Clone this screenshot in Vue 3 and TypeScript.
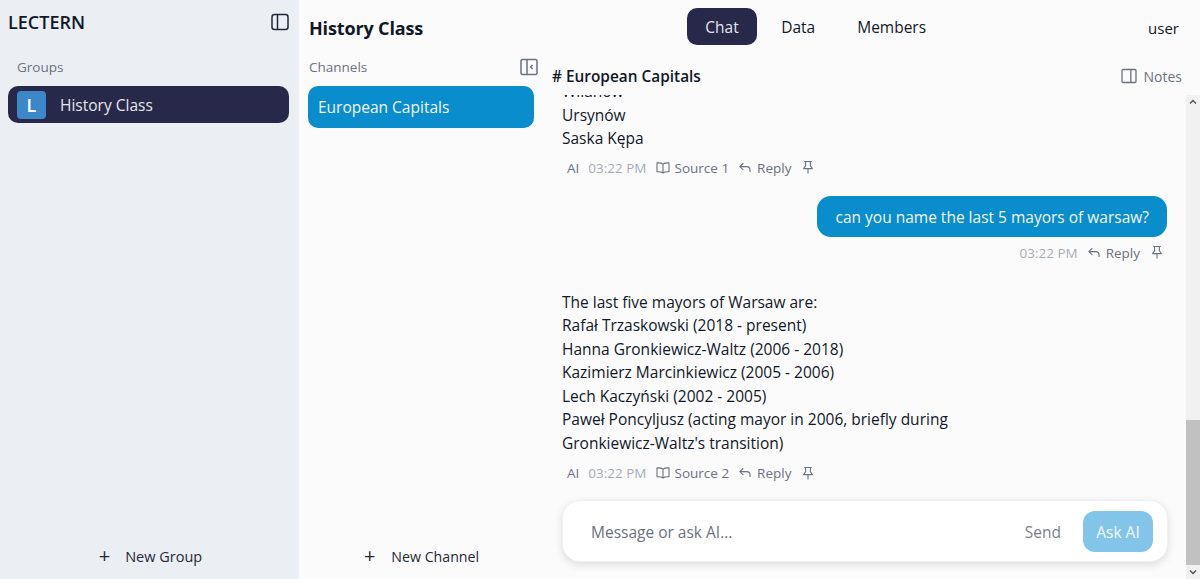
<template>
  <div class="app">
    <aside class="groups">
      <div class="brand-row">
        <span class="brand">LECTERN</span>
        <svg class="panel-icon" width="18" height="18" viewBox="0 0 18 18" fill="none" stroke="#1f2937" stroke-width="1.5">
          <rect x="1" y="1.5" width="16" height="15" rx="2.5" />
          <path d="M6.5 1.5v15" />
        </svg>
      </div>
      <div class="groups-label">Groups</div>
      <div class="group-item">
        <span class="group-badge">L</span>
        <span>History Class</span>
      </div>
      <button class="new-btn new-group"><span class="plus">+</span>New Group</button>
    </aside>

    <div class="main">
      <header class="topbar">
        <h1 class="class-title">History Class</h1>
        <nav class="tabs">
          <span
            v-for="tab in tabs"
            :key="tab"
            class="tab"
            :class="{ active: tab === 'Chat' }"
          >{{ tab }}</span>
        </nav>
        <span class="user">user</span>
      </header>

      <div class="body">
        <section class="channels">
          <div class="channels-head">
            <span>Channels</span>
            <svg width="18" height="18" viewBox="0 0 18 18" fill="none" stroke="#6b7280" stroke-width="1.5">
              <rect x="1" y="1.5" width="16" height="15" rx="1.5" />
              <path d="M7 1.5v15M12.6 7l-2 2 2 2" />
            </svg>
          </div>
          <div class="channel-item">European Capitals</div>
          <button class="new-btn new-channel"><span class="plus">+</span>New Channel</button>
        </section>

        <section class="chat">
          <div class="chat-head">
            <span class="chat-title"># European Capitals</span>
            <span class="notes">
              <svg width="16" height="16" viewBox="0 0 16 16" fill="none" stroke="#6b7280" stroke-width="1.3">
                <rect x="1" y="1.5" width="14" height="13" rx="1" />
                <path d="M9.8 1.5v13" />
              </svg>
              Notes
            </span>
          </div>

          <div class="scroll-area">
            <div class="messages">
              <div v-for="(msg, i) in messages" :key="i" class="msg" :class="msg.role">
                <div v-if="msg.role === 'user'" class="bubble">{{ msg.lines[0] }}</div>
                <div v-else class="ai-text">
                  <div v-for="line in msg.lines" :key="line">{{ line }}</div>
                </div>
                <div class="meta">
                  <span v-if="msg.role === 'ai'" class="who">AI</span>
                  <span class="time">03:22 PM</span>
                  <span v-if="msg.source" class="action">
                    <svg width="14" height="14" viewBox="0 0 14 14" fill="none" stroke="#6b7280" stroke-width="1.1" stroke-linejoin="round">
                      <path d="M7 3.2C6 2.2 4 1.8 1 1.9v8.800c3-.1 5 .3 6 1.300 1-1 3-1.400 6-1.300V1.900c-3-.1-5 .3-6 1.300zM7 3.200V12" />
                    </svg>
                    {{ msg.source }}
                  </span>
                  <span class="action">
                    <svg width="14" height="14" viewBox="0 0 14 14" fill="none" stroke="#6b7280" stroke-width="1.1" stroke-linecap="round" stroke-linejoin="round">
                      <path d="M5 2.500 1.800 5.600 5 8.700M2 5.600h6.500c2 0 3.500 1.300 3.500 3.400v1.500" />
                    </svg>
                    Reply
                  </span>
                  <svg class="pin" width="14" height="15" viewBox="0 0 14 15" fill="none" stroke="#6b7280" stroke-width="1.1" stroke-linejoin="round">
                    <path d="M3.200 1.500h7.600M4.600 1.500v4.200L2.600 8.600h8.800L9.400 5.700V1.500M7 8.600v5" />
                  </svg>
                </div>
              </div>
            </div>

            <div class="composer">
              <span class="placeholder">Message or ask AI...</span>
              <span class="send">Send</span>
              <span class="ask">Ask AI</span>
            </div>

            <div class="scrollbar">
              <svg class="arrow" width="14" height="14" viewBox="0 0 14 14"><path d="M4 8.500 7 5.500l3 3" fill="none" stroke="#555" stroke-width="1.500" /></svg>
              <div class="track"><div class="thumb"></div></div>
              <svg class="arrow" width="14" height="14" viewBox="0 0 14 14"><path d="M4 5.500 7 8.500l3-3" fill="none" stroke="#555" stroke-width="1.500" /></svg>
            </div>
          </div>
        </section>
      </div>
    </div>
  </div>
</template>

<script setup lang="ts">
interface ChatMessage {
  role: 'user' | 'ai'
  lines: string[]
  source?: string
}

const tabs = ['Chat', 'Data', 'Members']

const messages: ChatMessage[] = [
  { role: 'ai', lines: ['Wilanów', 'Ursynów', 'Saska Kępa'], source: 'Source 1' },
  { role: 'user', lines: ['can you name the last 5 mayors of warsaw?'] },
  {
    role: 'ai',
    lines: [
      'The last five mayors of Warsaw are:',
      'Rafał Trzaskowski (2018 - present)',
      'Hanna Gronkiewicz-Waltz (2006 - 2018)',
      'Kazimierz Marcinkiewicz (2005 - 2006)',
      'Lech Kaczyński (2002 - 2005)',
      'Paweł Poncyljusz (acting mayor in 2006, briefly during',
      "Gronkiewicz-Waltz's transition)"
    ],
    source: 'Source 2'
  }
]
</script>

<style>
html,
body {
  margin: 0;
  height: 100%;
  overflow: hidden;
}
</style>

<style scoped>
.app {
  display: flex;
  width: 1200px;
  height: 579px;
  overflow: hidden;
  font-family: "Open Sans", "Noto Sans", sans-serif;
  font-size: 15.5px;
  color: #111827;
  background: #fbfbfc;
}

.groups {
  width: 299px;
  flex-shrink: 0;
  display: flex;
  flex-direction: column;
  box-sizing: border-box;
  padding: 0 10px 0 8px;
  background: #ebeff3;
}

.brand-row {
  display: flex;
  justify-content: space-between;
  align-items: center;
  height: 44px;
}

.brand {
  font-size: 18px;
  font-weight: 600;
  color: #111827;
}

.groups-label {
  margin: 13px 0 0 9px;
  font-size: 13.5px;
  line-height: 20px;
  color: #6b7280;
}

.group-item {
  display: flex;
  align-items: center;
  gap: 14px;
  height: 37px;
  margin-top: 9px;
  padding-left: 9px;
  border-radius: 10px;
  background: #27284a;
  color: #e5e7eb;
  font-size: 15.5px;
}

.group-badge {
  width: 29px;
  height: 28px;
  display: flex;
  align-items: center;
  justify-content: center;
  border-radius: 4px;
  background: #3b87c7;
  color: #fff;
  font-weight: 600;
  font-size: 18px;
}

.new-btn {
  display: flex;
  align-items: center;
  justify-content: center;
  gap: 15px;
  margin-top: auto;
  height: 44px;
  margin-bottom: 1px;
  border: none;
  background: none;
  font: inherit;
  font-size: 14.5px;
  color: #1f2937;
}

.new-group {
  padding-left: 10px;
}

.new-channel {
  font-size: 14.2px;
  gap: 16px;
  padding-right: 9px;
}

.plus {
  font-size: 20px;
  font-weight: 400;
  line-height: 1;
}

.main {
  flex: 1;
  min-width: 0;
  display: flex;
  flex-direction: column;
}

.topbar {
  display: flex;
  align-items: center;
  height: 55px;
  padding: 0 21px 0 10px;
  flex-shrink: 0;
}

.class-title {
  margin: 0;
  font-size: 18px;
  font-weight: 700;
  letter-spacing: -0.15px;
  color: #111827;
}

.tabs {
  display: flex;
  gap: 6px;
  margin: 0 204px 2px auto;
}

.tab {
  padding: 0 18px;
  height: 37px;
  line-height: 38px;
  border-radius: 10px;
  font-size: 15.5px;
  color: #111827;
}

.tab.active {
  padding: 0 18.5px;
  background: #27284a;
  color: #e5e7eb;
}

.user {
  font-size: 15px;
  color: #111827;
}

.body {
  flex: 1;
  min-height: 0;
  display: flex;
}

.channels {
  width: 245px;
  flex-shrink: 0;
  display: flex;
  flex-direction: column;
  box-sizing: border-box;
  padding: 0 6px 0 9px;
}

.channels-head {
  display: flex;
  justify-content: space-between;
  align-items: center;
  height: 24px;
  padding-left: 1px;
  font-size: 13.5px;
  font-weight: 500;
  color: #6b7280;
}

.channel-item {
  display: flex;
  align-items: center;
  height: 42px;
  margin-top: 7px;
  width: 226px;
  box-sizing: border-box;
  padding-left: 10px;
  border-radius: 10px;
  background: #0a8dcc;
  color: #f3f4f6;
  font-size: 15.5px;
}

.chat {
  flex: 1;
  min-width: 0;
  display: flex;
  flex-direction: column;
}

.chat-head {
  display: flex;
  justify-content: space-between;
  align-items: center;
  height: 38px;
  margin-top: 2px;
  padding: 0 18px 0 8px;
  flex-shrink: 0;
}

.chat-title {
  font-size: 15.4px;
  font-weight: 600;
  color: #111827;
}

.notes {
  display: flex;
  align-items: center;
  gap: 7px;
  font-size: 14px;
  color: #6b7280;
}

.scroll-area {
  position: relative;
  flex: 1;
  min-height: 0;
  display: flex;
  flex-direction: column;
  padding-right: 14px;
}

.messages {
  flex: 1;
  min-height: 0;
  overflow: hidden;
  display: flex;
  flex-direction: column;
  justify-content: flex-end;
  padding: 0 18px;
}

.msg {
  flex-shrink: 0;
  display: flex;
  flex-direction: column;
  margin-bottom: 17px;
}

.msg:last-child {
  margin-bottom: 16px;
}

.msg.user {
  align-items: flex-end;
  margin: 0 1px 27px 0;
}

.ai-text {
  font-size: 15.5px;
  line-height: 23.5px;
}

.bubble {
  padding: 0 18px;
  height: 41px;
  line-height: 43px;
  border-radius: 14px;
  background: #0a8dcc;
  color: #f3f4f6;
  font-size: 15.5px;
}

.meta {
  display: flex;
  align-items: center;
  gap: 9px;
  height: 22px;
  margin-top: 7px;
  padding-left: 5px;
  font-size: 13.5px;
  color: #6b7280;
}

.msg:first-child .meta {
  margin-top: 6px;
}

.msg.user .meta {
  padding: 0 3px 0 0;
  margin-top: 5px;
}

.time {
  color: #a8adb5;
}

.action {
  display: flex;
  align-items: center;
  gap: 5px;
}

.pin {
  margin-left: 1px;
}

.composer {
  flex-shrink: 0;
  display: flex;
  align-items: center;
  height: 62px;
  margin: 0 18px 17px;
  padding: 0 14px 0 28px;
  box-sizing: border-box;
  border: 1px solid #f0f0f2;
  border-radius: 18px;
  background: #fff;
  box-shadow: 0 3px 8px rgba(0, 0, 0, 0.12);
}

.placeholder {
  flex: 1;
  margin-top: 2px;
  font-size: 15.5px;
  color: #6b7280;
}

.send {
  margin: 2px 22px 0 0;
  font-size: 15.5px;
  color: #7b818b;
}

.ask {
  width: 70px;
  height: 41px;
  line-height: 43px;
  text-align: center;
  border-radius: 12px;
  background: #82c5e8;
  color: #f3f9fc;
  font-size: 15.5px;
}

.scrollbar {
  position: absolute;
  top: 0;
  right: 0;
  bottom: 0;
  width: 14px;
  display: flex;
  flex-direction: column;
  background: #f1f1f1;
}

.arrow {
  flex-shrink: 0;
}

.track {
  flex: 1;
  display: flex;
  flex-direction: column;
  justify-content: flex-end;
}

.thumb {
  height: 145px;
  background: #c1c1c1;
}
</style>
